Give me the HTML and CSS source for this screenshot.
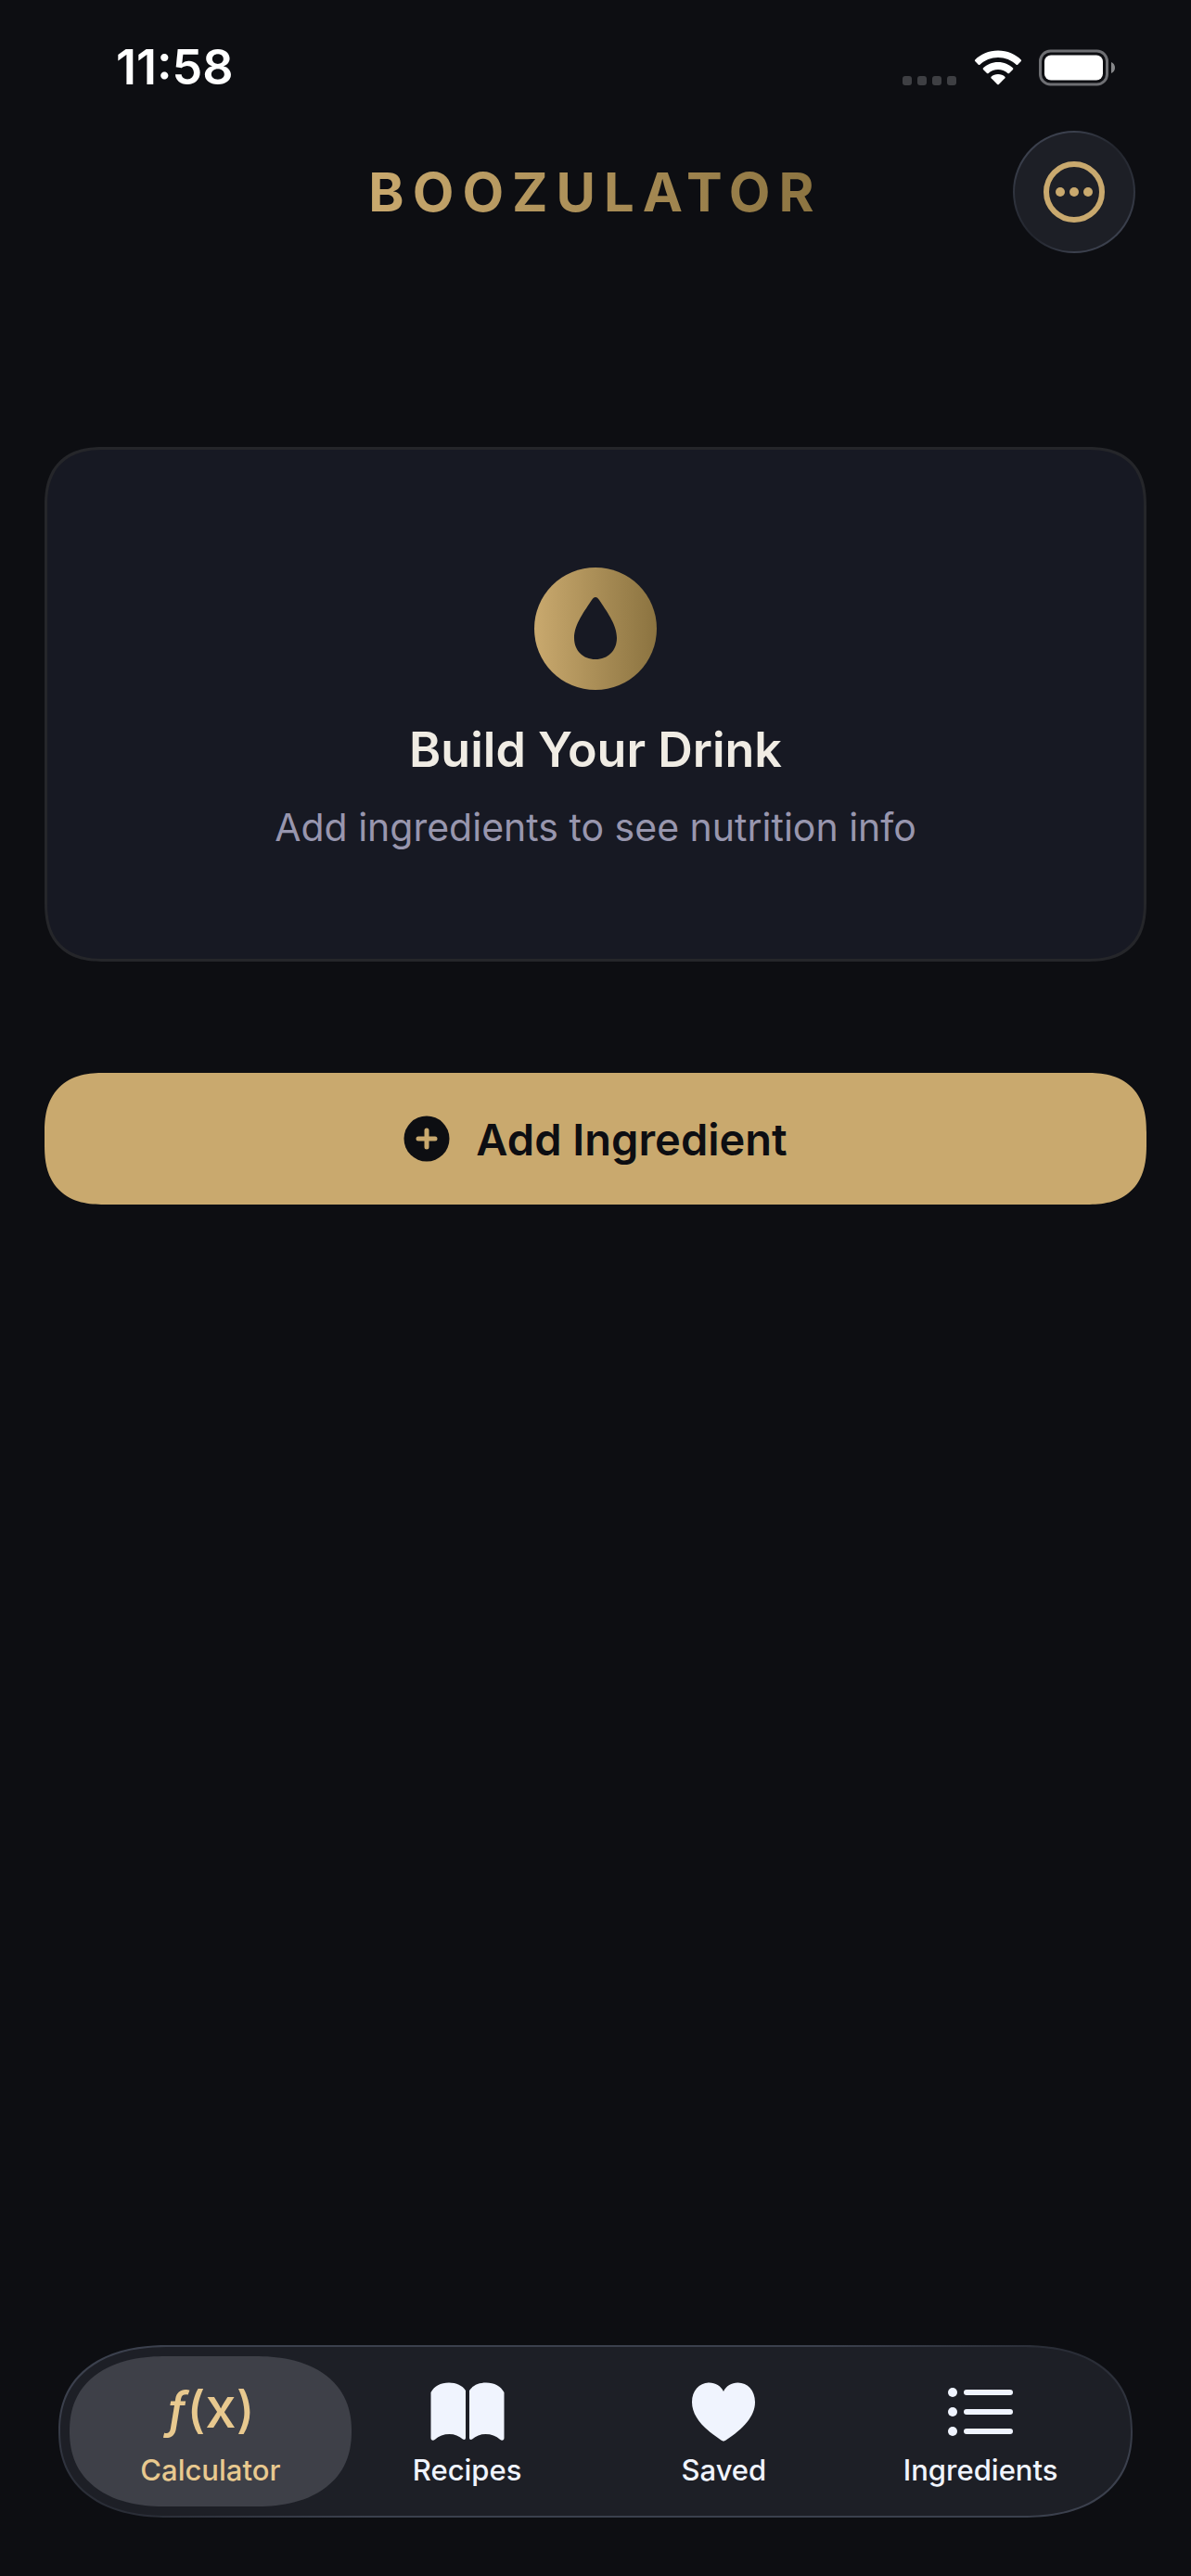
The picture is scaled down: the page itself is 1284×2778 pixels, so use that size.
FILE: index.html
```html
<!DOCTYPE html>
<html lang="en">
  <head>
    <meta charset="UTF-8" />
    <meta name="viewport" content="width=device-width, initial-scale=1.0" />
    <title>Boozulator</title>
    <link rel="stylesheet" href="styles.css">
  </head>
  <body>
    <div class="status-bar">
      <span class="time">11:58</span>
      <div class="status-icons">
        <svg class="signal" width="58" height="38" viewBox="0 0 58 38" aria-hidden="true">
          <rect x="0" y="28" width="10" height="10" rx="3" />
          <rect x="16" y="28" width="10" height="10" rx="3" />
          <rect x="32" y="28" width="10" height="10" rx="3" />
          <rect x="48" y="28" width="10" height="10" rx="3" />
        </svg>
        <svg class="wifi" width="52" height="38" viewBox="0 0 52 38" aria-hidden="true">
          <path d="M26 0.5C36 0.5 45 4.500 50.800 10.500Q51.500 11.300 50.800 12.100L47.200 15.700Q46.400 16.400 45.600 15.700C40.500 10.900 33.500 8 26 8S11.500 10.900 6.400 15.700Q5.600 16.400 4.800 15.700L1.200 12.100Q0.500 11.300 1.200 10.500C7 4.500 16 0.500 26 0.500Z" />
          <path d="M26 13C32.500 13 38 15.500 42 19.300Q42.800 20.100 42 20.900L38 24.900Q37.200 25.600 36.400 24.900C33.600 22.400 30 21 26 21S18.400 22.400 15.600 24.900Q14.800 25.600 14 24.900L10 20.900Q9.200 20.100 10 19.300C14 15.500 19.500 13 26 13Z" />
          <path d="M26 26C29 26 31.500 27 33.400 28.700Q34.100 29.500 33.400 30.300L26.800 37Q26 37.700 25.200 37L18.600 30.300Q17.900 29.500 18.600 28.700C20.500 27 23 26 26 26Z" />
        </svg>
        <svg class="battery" width="83" height="40" viewBox="0 0 83 40" aria-hidden="true">
          <rect class="battery-case" x="1.500" y="2" width="72" height="36" rx="11" />
          <rect class="battery-level" x="6" y="6.500" width="63" height="27" rx="7" />
          <path class="battery-tip" d="M78 14C80.500 14.800 82 17.200 82 20S80.500 25.200 78 26Z" />
        </svg>
      </div>
    </div>

    <header>
      <h1>BOOZULATOR</h1>
      <button class="menu-btn" type="button" aria-label="More options">
        <svg width="66" height="66" viewBox="0 0 66 66" aria-hidden="true">
          <circle cx="33" cy="33" r="30" fill="none" stroke="currentColor" stroke-width="6" />
          <circle cx="18" cy="33" r="5" />
          <circle cx="33" cy="33" r="5" />
          <circle cx="48" cy="33" r="5" />
        </svg>
      </button>
    </header>

    <main>
      <section class="card">
        <svg class="drop" width="132" height="132" viewBox="0 0 132 132" aria-hidden="true">
          <defs>
            <linearGradient id="gold">
              <stop offset="0" stop-color="#c9a96e" />
              <stop offset="1" stop-color="#8b7340" />
            </linearGradient>
          </defs>
          <circle cx="66" cy="66" r="66" fill="url(#gold)" />
          <path d="M66 32C67.500 32 68.700 33 70 35C77 46 89 61 89 76C89 89.500 79.500 99 66 99S43 89.500 43 76C43 61 55 46 62 35C63.300 33 64.500 32 66 32Z" fill="#171923" />
        </svg>
        <h2>Build Your Drink</h2>
        <p>Add ingredients to see nutrition info</p>
      </section>

      <button class="add-btn" type="button">
        <svg width="50" height="50" viewBox="0 0 50 50" aria-hidden="true">
          <circle cx="25" cy="25" r="24.500" />
          <path d="M25 16V34M16 25H34" />
        </svg>
        Add Ingredient
      </button>
    </main>

    <nav class="tab-bar">
      <a class="tab active" href="#calculator" aria-current="page">
        <span class="tab-icon" aria-hidden="true">
          <span class="fx"><i>ƒ</i>(<b>x</b>)</span>
        </span>
        Calculator
      </a>
      <a class="tab" href="#recipes">
        <span class="tab-icon">
          <svg width="80" height="64" viewBox="0 0 80 64" aria-hidden="true">
            <path d="M0.500 11C4 4.500 11 0.500 20 0.500C28 0.500 34.500 3.500 38 9V60C38 62 36.500 62.500 35 61.500C31 58 26 56 20.500 56C14.500 56 9 58 5 61.800C3 63.500 0.500 63 0.500 60Z" />
            <path d="M79.500 11C76 4.500 69 0.500 60 0.500C52 0.500 45.500 3.500 42 9V60C42 62 43.500 62.500 45 61.500C49 58 54 56 59.500 56C65.500 56 71 58 75 61.800C77 63.500 79.500 63 79.500 60Z" />
          </svg>
        </span>
        Recipes
      </a>
      <a class="tab" href="#saved">
        <span class="tab-icon">
          <svg width="70" height="64" viewBox="0 0 70 64" aria-hidden="true">
            <path d="M35 63.500C34 63.500 33 62.800 32 62.200C14 50.500 1 37 1 21.500C1 9 9 0.500 19.500 0.500C26.500 0.500 32 4 35 10C38 4 43.500 0.500 50.500 0.500C61 0.500 69 9 69 21.500C69 37 56 50.500 38 62.200C37 62.800 36 63.500 35 63.500Z" />
          </svg>
        </span>
        Saved
      </a>
      <a class="tab" href="#ingredients">
        <span class="tab-icon">
          <svg width="70" height="52" viewBox="0 0 70 52" aria-hidden="true">
            <circle cx="5" cy="5" r="5" />
            <circle cx="5" cy="26" r="5" />
            <circle cx="5" cy="47" r="5" />
            <rect x="17" y="2" width="53" height="6" rx="3" />
            <rect x="17" y="23" width="53" height="6" rx="3" />
            <rect x="17" y="44" width="53" height="6" rx="3" />
          </svg>
        </span>
        Ingredients
      </a>
    </nav>
  </body>
</html>
```
FILE: styles.css
```css
/* General Styling */
* {
  box-sizing: border-box;
}

body {
  font-family: Inter, "Liberation Sans", sans-serif;
  margin: 0;
  min-height: 100vh;
  display: flex;
  flex-direction: column;
  background-color: #0d0e12;
  color: #f0ece4;
}

svg {
  display: block;
  fill: currentColor;
}

button {
  font-family: inherit;
  border: none;
  cursor: pointer;
}

/* Status bar */
.status-bar {
  display: flex;
  align-items: center;
  justify-content: space-between;
  height: 141px;
  padding: 4px 81px 0 125px;
  color: white;
}

.time {
  font-size: 52px;
  font-weight: 600;
}

.status-icons {
  display: flex;
  align-items: center;
}

.signal {
  margin-right: 19px;
  fill: #3e3f43;
}

.wifi {
  margin-right: 18px;
}

.battery-case {
  fill: none;
  stroke: #6e6f73;
  stroke-width: 3px;
}

.battery-tip {
  fill: #86878a;
}

/* Header */
header {
  display: grid;
  grid-template-columns: 1fr auto 1fr;
  align-items: center;
  padding: 0 60px;
}

h1 {
  grid-column: 2;
  margin: 0;
  font-size: 58px;
  font-weight: 700;
  line-height: 72px;
  letter-spacing: 9px;
  background: linear-gradient(to right, #c9a96e, #8b7340);
  -webkit-background-clip: text;
  background-clip: text;
  color: transparent;
}

.menu-btn {
  justify-self: end;
  display: flex;
  align-items: center;
  justify-content: center;
  width: 132px;
  height: 132px;
  padding: 0;
  border: 2px solid transparent;
  border-radius: 50%;
  background:
    linear-gradient(#1d1f26, #1d1f26) padding-box,
    conic-gradient(#3b404d, #22252d 12%, #3b404d 35%, #3b404d 50%, #22252d 62%, #3b404d 85%, #3b404d) border-box;
  color: #c9a96e;
}

/* Content */
main {
  flex: 1;
  padding: 209px 48px 48px;
}

.card {
  display: flex;
  flex-direction: column;
  align-items: center;
  padding: 127px 24px 110px;
  border: 3px solid #25262a;
  border-radius: 54px;
  background-color: #171923;
  text-align: center;
}

.drop {
  margin-bottom: 32px;
}

h2 {
  margin: 0 0 18px;
  font-size: 52px;
  font-weight: 600;
  line-height: 66px;
}

.card p {
  margin: 0;
  font-size: 41px;
  line-height: 64px;
  color: #9896ae;
}

.add-btn {
  display: flex;
  align-items: center;
  justify-content: center;
  gap: 28px;
  width: 100%;
  height: 142px;
  margin-top: 120px;
  border-radius: 54px;
  background-color: #c9a96e;
  color: #0d0e12;
  font-size: 47px;
  font-weight: 600;
}

.add-btn path {
  stroke: #c9a96e;
  stroke-width: 5px;
  stroke-linecap: round;
}

/* Tab bar */
.tab-bar {
  display: flex;
  margin: 0 63px 63px;
  padding: 10px;
  border: 2px solid transparent;
  border-radius: 93px;
  background:
    linear-gradient(#1d1f26, #1d1f26) padding-box,
    linear-gradient(20deg, #23262e, #3b404d 20%, #3b404d 80%, #23262e) border-box;
}

.tab {
  flex: 1;
  display: flex;
  flex-direction: column;
  align-items: center;
  height: 162px;
  padding-top: 20px;
  border-radius: 81px;
  color: #f0f4fe;
  font-size: 31px;
  font-weight: 500;
  line-height: 42px;
  text-decoration: none;
}

/* neighbouring tabs share a strip of the bar */
.tab + .tab {
  margin-left: -27px;
}

.tab.active {
  background-color: #3e4048;
  color: #e8c98f;
}

.tab-icon {
  display: flex;
  align-items: center;
  height: 80px;
  margin-bottom: 2px;
}

.fx {
  padding-bottom: 8px;
  font-size: 54px;
}

.fx b {
  font-size: 60px;
  font-weight: 500;
}

/* Smoother corners where the browser has them */
@supports (corner-shape: superellipse(1.3)) {
  .card,
  .add-btn {
    border-radius: 64px;
    corner-shape: superellipse(1.3);
  }

  .tab-bar {
    border-radius: 118px / 93px;
    corner-shape: superellipse(1.2);
  }

  .tab {
    border-radius: 104px / 81px;
    corner-shape: superellipse(1.2);
  }
}
```
